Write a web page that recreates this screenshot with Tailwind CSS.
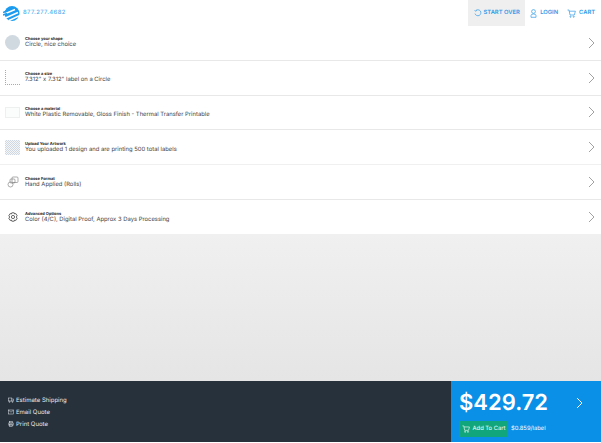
<!DOCTYPE html>
<html lang="en">
<head>
  <meta charset="UTF-8">
  <meta name="viewport" content="width=device-width, initial-scale=1.0">
  <title>Label Quote</title>
  <script src="https://cdn.jsdelivr.net/npm/@tailwindcss/browser@4"></script>
</head>
<body class="bg-white font-['Inter',sans-serif] [text-rendering:geometricPrecision] overflow-hidden">
  <div class="w-[601px] h-[443px] flex flex-col">

    <!-- top bar -->
    <header class="h-[26px] flex items-center justify-between pl-[3px] pr-[6px] shrink-0">
      <div class="flex items-center gap-[3px]">
        <svg width="17" height="17" viewBox="0 0 17 17" fill="none">
          <circle cx="9" cy="8.5" r="7.5" fill="#1b9cf0"/>
          <path d="M0 9.5 L12 4.5 M2.5 13 L15 7.5 M6 15.5 L17 10.5" stroke="#fff" stroke-width="1.5"/>
          <path d="M0 7.5 L7 4.5 M0 10 L4 8.5" stroke="#1b9cf0" stroke-width="1.6"/>
        </svg>
        <span class="text-[5.8px] font-medium tracking-[0.45px] text-[#45adf0] pt-[1px]">877.277.4682</span>
      </div>
      <nav class="flex items-center h-full">
        <a class="h-full w-[57px] bg-[#efefef] flex items-center justify-center gap-[2px] text-[5.8px] font-semibold text-[#2f9be8]">
          <svg width="8" height="8" viewBox="0 0 8 8" fill="none" stroke="#2f9be8" stroke-width="0.7"><path d="M1.6 1.8 A3 3 0 1 1 1 4.6"/><path d="M0.6 1.2 L1.7 2.3 L2.7 1.2"/></svg>
          START OVER
        </a>
        <a class="ml-[5px] flex items-center gap-[3px] text-[5.8px] font-semibold text-[#2f9be8]">
          <svg width="7" height="9" viewBox="0 0 7 9" fill="none" stroke="#2f9be8" stroke-width="0.7"><circle cx="3.5" cy="2.5" r="1.9"/><path d="M1 8.3 V6.6 Q1 5 3.5 5 Q6 5 6 6.6 V8.3 Z"/></svg>
          LOGIN
        </a>
        <a class="ml-[9px] flex items-center gap-[3px] text-[5.8px] font-semibold text-[#2f9be8]">
          <svg width="9" height="9" viewBox="0 0 9 9" fill="none" stroke="#2f9be8" stroke-width="0.7"><path d="M0.5 1 H2 L3 6 H7.3 L8.4 2.2 H2.3"/><circle cx="3.5" cy="7.7" r="0.6"/><circle cx="6.7" cy="7.7" r="0.6"/></svg>
          CART
        </a>
      </nav>
    </header>

    <!-- option rows -->
    <section class="shrink-0">
      <div class="h-[34.8px] flex items-center border-b border-[#e8e8e8] pr-[6px]">
        <div class="w-[25px] flex justify-center"><div class="w-[15px] h-[15px] rounded-full bg-[#d0d8e0]"></div></div>
        <div class="flex-1 leading-none">
          <p class="text-[4px] font-bold text-[#222] mb-[1px]">Choose your shape</p>
          <p class="text-[5.86px] text-[#444]">Circle, nice choice</p>
        </div>
        <svg width="7" height="12" viewBox="0 0 7 12" fill="none" stroke="#8a8a8a" stroke-width="0.8"><path d="M1 1 L6 6 L1 11"/></svg>
      </div>
      <div class="h-[34.8px] flex items-center border-b border-[#e8e8e8] pr-[6px]">
        <div class="w-[25px] flex justify-center"><div class="w-[15px] h-[15px] border-l border-b border-dotted border-[#aaa] bg-[#fdfdfd]"></div></div>
        <div class="flex-1 leading-none">
          <p class="text-[4px] font-bold text-[#222] mb-[1px]">Choose a size</p>
          <p class="text-[5.86px] text-[#444]">7.312" x 7.312" label on a Circle</p>
        </div>
        <svg width="7" height="12" viewBox="0 0 7 12" fill="none" stroke="#8a8a8a" stroke-width="0.8"><path d="M1 1 L6 6 L1 11"/></svg>
      </div>
      <div class="h-[34.8px] flex items-center border-b border-[#e8e8e8] pr-[6px]">
        <div class="w-[25px] flex justify-center"><div class="w-[15px] h-[11px] bg-[#fbfcfc] border border-[#eef0f0]"></div></div>
        <div class="flex-1 leading-none">
          <p class="text-[4px] font-bold text-[#222] mb-[1px]">Choose a material</p>
          <p class="text-[5.86px] text-[#444]">White Plastic Removable, Gloss Finish - Thermal Transfer Printable</p>
        </div>
        <svg width="7" height="12" viewBox="0 0 7 12" fill="none" stroke="#8a8a8a" stroke-width="0.8"><path d="M1 1 L6 6 L1 11"/></svg>
      </div>
      <div class="h-[34.8px] flex items-center border-b border-[#f0f0f0] pr-[6px]">
        <div class="w-[25px] flex justify-center"><div class="w-[15px] h-[15px] bg-[repeating-conic-gradient(#cfd8e2_0_25%,#f4f6f8_0_50%)] bg-[length:2px_2px]"></div></div>
        <div class="flex-1 leading-none">
          <p class="text-[4px] font-bold text-[#222] mb-[1px]">Upload Your Artwork</p>
          <p class="text-[5.86px] text-[#444]">You uploaded 1 design and are printing 500 total labels</p>
        </div>
        <svg width="7" height="12" viewBox="0 0 7 12" fill="none" stroke="#8a8a8a" stroke-width="0.8"><path d="M1 1 L6 6 L1 11"/></svg>
      </div>
      <div class="h-[34.8px] flex items-center border-b border-[#e8e8e8] pr-[6px]">
        <div class="w-[25px] flex justify-center">
          <svg width="12" height="12" viewBox="0 0 12 12" fill="none" stroke="#777" stroke-width="0.6"><rect x="5" y="1" width="6" height="5.5" rx="1"/><rect x="3" y="3" width="5" height="4" rx="1"/><circle cx="3.5" cy="8.5" r="2.5"/></svg>
        </div>
        <div class="flex-1 leading-none">
          <p class="text-[4px] font-bold text-[#222] mb-[1px]">Choose Format</p>
          <p class="text-[5.86px] text-[#444]">Hand Applied (Rolls)</p>
        </div>
        <svg width="7" height="12" viewBox="0 0 7 12" fill="none" stroke="#8a8a8a" stroke-width="0.8"><path d="M1 1 L6 6 L1 11"/></svg>
      </div>
      <div class="h-[34.5px] flex items-center pr-[6px]">
        <div class="w-[25px] flex justify-center">
          <svg width="10" height="10" viewBox="0 0 10 10" fill="none" stroke="#444" stroke-width="0.8"><circle cx="5" cy="5" r="1.6"/><path d="M3.8 0.8 H6.2 L6.6 2 L7.9 1.6 L9.2 3.8 L8.2 5 L9.2 6.2 L7.9 8.4 L6.6 8 L6.2 9.2 H3.8 L3.4 8 L2.1 8.4 L0.8 6.2 L1.8 5 L0.8 3.8 L2.1 1.6 L3.4 2 Z"/></svg>
        </div>
        <div class="flex-1 leading-none">
          <p class="text-[4px] font-bold text-[#222] mb-[1px]">Advanced Options</p>
          <p class="text-[5.86px] text-[#444]">Color (4/C), Digital Proof, Approx 3 Days Processing</p>
        </div>
        <svg width="7" height="12" viewBox="0 0 7 12" fill="none" stroke="#8a8a8a" stroke-width="0.8"><path d="M1 1 L6 6 L1 11"/></svg>
      </div>
    </section>

    <!-- empty area -->
    <div class="flex-1 bg-gradient-to-b from-[#f0f0f0] to-[#e5e5e5]"></div>

    <!-- footer -->
    <footer class="h-[62px] shrink-0 flex border-b border-white">
      <div class="flex-1 bg-[#27313b] flex flex-col justify-center gap-[5px] pl-[8px] pt-[1px] text-[6px] text-[#e4e8ec] leading-[7px]">
        <a class="flex items-center gap-[2px]">
          <svg width="6" height="6" viewBox="0 0 6 6" fill="none" stroke="#e4e8ec" stroke-width="0.5"><rect x="0.3" y="1" width="3.5" height="3"/><path d="M3.8 2 H5.6 V4 H3.8"/><circle cx="1.5" cy="4.8" r="0.6"/><circle cx="4.5" cy="4.8" r="0.6"/></svg>
          Estimate Shipping
        </a>
        <a class="flex items-center gap-[2px]">
          <svg width="6" height="6" viewBox="0 0 6 6" fill="none" stroke="#e4e8ec" stroke-width="0.5"><rect x="0.3" y="1" width="5.4" height="4"/><path d="M0.3 1 L3 3.2 L5.7 1"/></svg>
          Email Quote
        </a>
        <a class="flex items-center gap-[2px]">
          <svg width="6" height="6" viewBox="0 0 6 6" fill="none" stroke="#e4e8ec" stroke-width="0.5"><rect x="1.5" y="0.4" width="3" height="1.6"/><rect x="0.3" y="2" width="5.4" height="2.2" rx="0.4"/><rect x="1.5" y="3.6" width="3" height="2"/></svg>
          Print Quote
        </a>
      </div>
      <div class="w-[150px] bg-[#0a90e6] pl-[8px] pr-[18px] pt-[6px] text-white">
        <div class="flex items-center justify-between">
          <span class="text-[22px] font-semibold leading-[32px]">$429.72</span>
          <svg width="7" height="12" viewBox="0 0 7 12" fill="none" stroke="#fff" stroke-width="1"><path d="M1 1 L6 6 L1 11"/></svg>
        </div>
        <div class="flex items-center gap-[3px] mt-[2px]">
          <a class="h-[16px] w-[49px] bg-[#12a67c] flex items-center justify-center gap-[3px] text-[5.8px]">
            <svg width="8" height="8" viewBox="0 0 9 9" fill="none" stroke="#fff" stroke-width="0.7"><path d="M0.5 1 H2 L3 6 H7.3 L8.4 2.2 H2.3"/><circle cx="3.5" cy="7.7" r="0.6"/><circle cx="6.7" cy="7.7" r="0.6"/></svg>
            Add To Cart
          </a>
          <span class="text-[5.8px]">$0.859/label</span>
        </div>
      </div>
    </footer>
  </div>
</body>
</html>
